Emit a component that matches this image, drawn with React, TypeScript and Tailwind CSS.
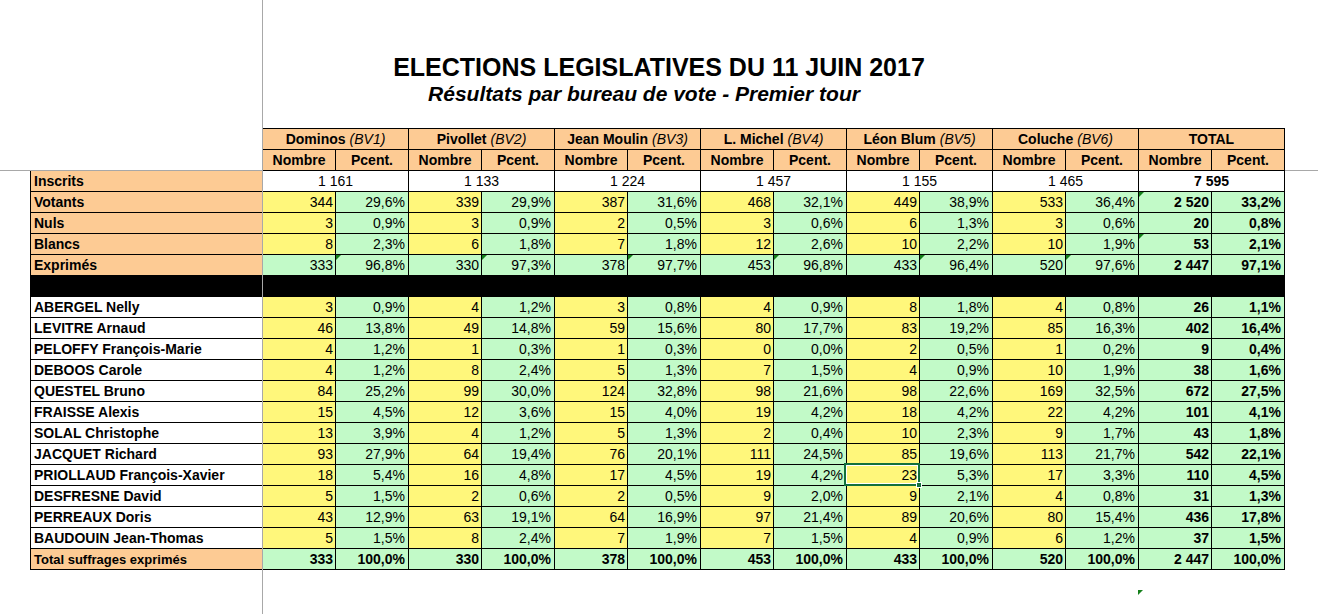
import React from 'react';

const ORANGE = 'bg-[#fdcb94]';
const YELLOW = 'bg-[#fff77b]';
const GREEN = 'bg-[#c2fac8]';

const bureaus = [
  { name: 'Dominos', code: 'BV1' },
  { name: 'Pivollet', code: 'BV2' },
  { name: 'Jean Moulin', code: 'BV3' },
  { name: 'L. Michel', code: 'BV4' },
  { name: 'Léon Blum', code: 'BV5' },
  { name: 'Coluche', code: 'BV6' },
];

const inscrits = ['1 161', '1 133', '1 224', '1 457', '1 155', '1 465', '7 595'];

// [nombre, pcent] per bureau, last pair = TOTAL
type Pair = [string, string];

const stats: { label: string; allGreen?: boolean; cells: Pair[]; tri?: number[] }[] = [
  {
    label: 'Votants',
    cells: [['344', '29,6%'], ['339', '29,9%'], ['387', '31,6%'], ['468', '32,1%'], ['449', '38,9%'], ['533', '36,4%'], ['2 520', '33,2%']],
    tri: [12],
  },
  {
    label: 'Nuls',
    cells: [['3', '0,9%'], ['3', '0,9%'], ['2', '0,5%'], ['3', '0,6%'], ['6', '1,3%'], ['3', '0,6%'], ['20', '0,8%']],
  },
  {
    label: 'Blancs',
    cells: [['8', '2,3%'], ['6', '1,8%'], ['7', '1,8%'], ['12', '2,6%'], ['10', '2,2%'], ['10', '1,9%'], ['53', '2,1%']],
    tri: [12],
  },
  {
    label: 'Exprimés',
    allGreen: true,
    cells: [['333', '96,8%'], ['330', '97,3%'], ['378', '97,7%'], ['453', '96,8%'], ['433', '96,4%'], ['520', '97,6%'], ['2 447', '97,1%']],
    tri: [1, 3, 5, 7, 9, 11],
  },
];

const candidates: { label: string; cells: Pair[] }[] = [
  { label: 'ABERGEL Nelly', cells: [['3', '0,9%'], ['4', '1,2%'], ['3', '0,8%'], ['4', '0,9%'], ['8', '1,8%'], ['4', '0,8%'], ['26', '1,1%']] },
  { label: 'LEVITRE Arnaud', cells: [['46', '13,8%'], ['49', '14,8%'], ['59', '15,6%'], ['80', '17,7%'], ['83', '19,2%'], ['85', '16,3%'], ['402', '16,4%']] },
  { label: 'PELOFFY François-Marie', cells: [['4', '1,2%'], ['1', '0,3%'], ['1', '0,3%'], ['0', '0,0%'], ['2', '0,5%'], ['1', '0,2%'], ['9', '0,4%']] },
  { label: 'DEBOOS Carole', cells: [['4', '1,2%'], ['8', '2,4%'], ['5', '1,3%'], ['7', '1,5%'], ['4', '0,9%'], ['10', '1,9%'], ['38', '1,6%']] },
  { label: 'QUESTEL Bruno', cells: [['84', '25,2%'], ['99', '30,0%'], ['124', '32,8%'], ['98', '21,6%'], ['98', '22,6%'], ['169', '32,5%'], ['672', '27,5%']] },
  { label: 'FRAISSE Alexis', cells: [['15', '4,5%'], ['12', '3,6%'], ['15', '4,0%'], ['19', '4,2%'], ['18', '4,2%'], ['22', '4,2%'], ['101', '4,1%']] },
  { label: 'SOLAL Christophe', cells: [['13', '3,9%'], ['4', '1,2%'], ['5', '1,3%'], ['2', '0,4%'], ['10', '2,3%'], ['9', '1,7%'], ['43', '1,8%']] },
  { label: 'JACQUET Richard', cells: [['93', '27,9%'], ['64', '19,4%'], ['76', '20,1%'], ['111', '24,5%'], ['85', '19,6%'], ['113', '21,7%'], ['542', '22,1%']] },
  { label: 'PRIOLLAUD François-Xavier', cells: [['18', '5,4%'], ['16', '4,8%'], ['17', '4,5%'], ['19', '4,2%'], ['23', '5,3%'], ['17', '3,3%'], ['110', '4,5%']] },
  { label: 'DESFRESNE David', cells: [['5', '1,5%'], ['2', '0,6%'], ['2', '0,5%'], ['9', '2,0%'], ['9', '2,1%'], ['4', '0,8%'], ['31', '1,3%']] },
  { label: 'PERREAUX Doris', cells: [['43', '12,9%'], ['63', '19,1%'], ['64', '16,9%'], ['97', '21,4%'], ['89', '20,6%'], ['80', '15,4%'], ['436', '17,8%']] },
  { label: 'BAUDOUIN Jean-Thomas', cells: [['5', '1,5%'], ['8', '2,4%'], ['7', '1,9%'], ['7', '1,5%'], ['4', '0,9%'], ['6', '1,2%'], ['37', '1,5%']] },
];

const totalRow: Pair[] = [['333', '100,0%'], ['330', '100,0%'], ['378', '100,0%'], ['453', '100,0%'], ['433', '100,0%'], ['520', '100,0%'], ['2 447', '100,0%']];

function Triangle() {
  return (
    <div className="absolute left-0 top-0 h-0 w-0 border-t-[5px] border-r-[5px] border-t-[#15801b] border-r-transparent" />
  );
}

function Cell({
  value,
  bg,
  bold,
  pct,
  tri,
  selected,
}: {
  value: string;
  bg: string;
  bold?: boolean;
  pct?: boolean;
  tri?: boolean;
  selected?: boolean;
}) {
  return (
    <div
      className={`relative flex h-[21px] w-[73px] items-center justify-end border-r border-b border-black ${
        pct ? 'pr-[3px]' : 'pr-[2px]'
      } ${bg} ${bold ? 'font-bold' : ''} ${selected ? 'z-10' : ''}`}
    >
      {tri && <Triangle />}
      {value}
      {selected && (
        <div className="absolute -left-[3px] -top-[2px] -right-px -bottom-px border-2 border-[#13703d]">
          <div className="absolute inset-0 border border-white" />
          <div className="absolute -right-[4px] -bottom-[4px] h-[6px] w-[6px] border border-white bg-[#13703d]" />
        </div>
      )}
    </div>
  );
}

function Label({ text, bg, small }: { text: string; bg: string; small?: boolean }) {
  return (
    <div
      className={`flex h-[21px] w-[232px] items-center border-r border-b border-black pl-[3px] font-bold ${bg} ${
        small ? 'text-[13px]' : ''
      }`}
    >
      {text}
    </div>
  );
}

function DataRow({
  label,
  labelBg,
  cells,
  allGreen,
  allBold,
  tri = [],
  small,
  selectedIdx,
}: {
  label: string;
  labelBg: string;
  cells: Pair[];
  allGreen?: boolean;
  allBold?: boolean;
  tri?: number[];
  small?: boolean;
  selectedIdx?: number;
}) {
  return (
    <div className="ml-[30px] flex w-max border-l border-black">
      <Label text={label} bg={labelBg} small={small} />
      {cells.map(([n, p], i) => {
        const isTotal = i === cells.length - 1;
        return (
          <React.Fragment key={i}>
            <Cell
              value={n}
              bg={allGreen || isTotal ? GREEN : YELLOW}
              bold={allBold || isTotal}
              tri={tri.includes(i * 2)}
              selected={selectedIdx === i * 2}
            />
            <Cell value={p} bg={GREEN} pct bold={allBold || isTotal} tri={tri.includes(i * 2 + 1)} />
          </React.Fragment>
        );
      })}
    </div>
  );
}

export default function App() {
  return (
    <div className="relative h-[614px] w-[1318px] overflow-hidden bg-white font-['Liberation_Sans',Arial,sans-serif] text-[14px] leading-none text-black">
      {/* Title */}
      <div className="flex h-[128px] flex-col items-center pt-[53px]">
        <div className="text-[25px] font-bold leading-[28px]">ELECTIONS LEGISLATIVES DU 11 JUIN 2017</div>
        <div className="mr-[30px] mt-[1px] text-[21px] font-bold italic leading-[23px]">
          Résultats par bureau de vote - Premier tour
        </div>
      </div>

      {/* Header rows */}
      <div className="ml-[262px] flex w-max border-t border-l border-black">
        {[...bureaus, { name: 'TOTAL', code: '' }].map((b) => (
          <div
            key={b.name}
            className={`flex h-[21px] w-[146px] items-center justify-center border-r border-b border-black font-bold ${ORANGE}`}
          >
            {b.name}
            {b.code && <span className="ml-[4px] font-normal italic">({b.code})</span>}
          </div>
        ))}
      </div>
      <div className="ml-[262px] flex w-max border-l border-black">
        {Array.from({ length: 7 }).map((_, i) => (
          <React.Fragment key={i}>
            <div className={`flex h-[21px] w-[73px] items-center justify-center border-r border-b border-black font-bold ${ORANGE}`}>
              Nombre
            </div>
            <div className={`flex h-[21px] w-[73px] items-center justify-center border-r border-b border-black font-bold ${ORANGE}`}>
              Pcent.
            </div>
          </React.Fragment>
        ))}
      </div>

      {/* Inscrits */}
      <div className="ml-[30px] flex w-max border-l border-black">
        <Label text="Inscrits" bg={ORANGE} />
        {inscrits.map((v, i) => (
          <div
            key={i}
            className={`flex h-[21px] w-[146px] items-center justify-center border-r border-b border-black bg-white ${
              i === 6 ? 'font-bold' : ''
            }`}
          >
            {v}
          </div>
        ))}
      </div>

      {stats.map((s) => (
        <DataRow key={s.label} label={s.label} labelBg={ORANGE} cells={s.cells} allGreen={s.allGreen} tri={s.tri} />
      ))}

      {/* separator */}
      <div className="ml-[30px] h-[21px] w-[1255px] bg-black" />

      {candidates.map((c) => (
        <DataRow
          key={c.label}
          label={c.label}
          labelBg="bg-white"
          cells={c.cells}
          selectedIdx={c.label === 'PRIOLLAUD François-Xavier' ? 8 : undefined}
        />
      ))}

      <DataRow label="Total suffrages exprimés" labelBg={ORANGE} cells={totalRow} allGreen allBold small />

      {/* freeze pane lines */}
      <div className="absolute left-[262px] top-0 z-20 h-full w-px bg-[#a8a8a8]" />
      <div className="absolute left-0 top-[170px] h-px w-[262px] bg-[#a8a8a8]" />
      <div className="absolute left-[1285px] top-[170px] h-px w-[33px] bg-[#a8a8a8]" />

      {/* stray comment marker */}
      <div className="absolute left-[1138px] top-[590px] h-0 w-0 border-t-[5px] border-r-[5px] border-t-[#15801b] border-r-transparent" />
    </div>
  );
}
